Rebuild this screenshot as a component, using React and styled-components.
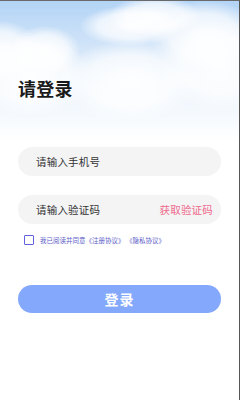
import React from "react";
import styled, { createGlobalStyle } from "styled-components";

const Global = createGlobalStyle`
  html, body { margin: 0; padding: 0; background: #fff; }
  body { font-family: "Noto Sans CJK SC", "Noto Sans", sans-serif; }
  * { box-sizing: border-box; }
`;

const Page = styled.div`
  position: relative;
  width: 240px;
  height: 400px;
  overflow: hidden;
  background: #fff;
  border-top: 1px solid #6a6a6a;
  border-right: 1px solid #555;
`;

const Sky = styled.div`
  position: absolute;
  left: 0;
  top: 0;
  width: 240px;
  height: 140px;
  background: linear-gradient(180deg, #b3d4f6 0%, #cfe3f8 30%, #eaf3fc 60%, #ffffff 100%);
  overflow: hidden;
`;

const Cloud = styled.div`
  position: absolute;
  border-radius: 50%;
  background: radial-gradient(ellipse at center, rgba(255,255,255,0.95) 0%, rgba(255,255,255,0.7) 45%, rgba(255,255,255,0) 72%);
`;

const Content = styled.div`
  position: relative;
  display: flex;
  flex-direction: column;
  padding: 0 18px 0 18px;
`;

const Title = styled.h1`
  margin: 74px 0 0 0;
  font-size: 18px;
  font-weight: 700;
  color: #1a1a1a;
  line-height: 26px;
  letter-spacing: 0.3px;
`;

const Field = styled.div`
  display: flex;
  align-items: center;
  justify-content: space-between;
  height: 29px;
  margin-top: ${(p) => p.$mt}px;
  padding: 0 8px 0 18px;
  border-radius: 15px;
  background: #f4f4f5;
`;

const Placeholder = styled.span`
  font-size: 10.5px;
  color: #333;
  letter-spacing: 0.2px;
`;

const CodeLink = styled.span`
  font-size: 10.5px;
  color: #ee6a8b;
  letter-spacing: 0.2px;
`;

const Agree = styled.div`
  display: flex;
  align-items: center;
  margin: 11px 0 0 6px;
  gap: 6px;
`;

const Box = styled.span`
  width: 10px;
  height: 10px;
  border: 1.3px solid #6060e0;
  border-radius: 1px;
`;

const AgreeText = styled.span`
  font-size: 6.5px;
  color: #5c5cc8;
  white-space: pre;
`;

const LoginButton = styled.button`
  margin-top: 40px;
  height: 28px;
  border: none;
  border-radius: 14px;
  background: #84a9fc;
  color: #fff;
  font-family: inherit;
  font-size: 14px;
  font-weight: 700;
  letter-spacing: 1px;
`;

export default function App() {
  return (
    <>
      <Global />
      <Page>
        <Sky>
          <Cloud style={{ left: -40, top: 20, width: 80, height: 60 }} />
          <Cloud style={{ left: -30, top: 35, width: 120, height: 80 }} />
          <Cloud style={{ left: 10, top: 25, width: 70, height: 50 }} />
          <Cloud style={{ left: 80, top: 5, width: 100, height: 40 }} />
          <Cloud style={{ left: 110, top: -5, width: 90, height: 40 }} />
          <Cloud style={{ left: 150, top: 0, width: 110, height: 70 }} />
          <Cloud style={{ left: 160, top: 20, width: 120, height: 90 }} />
          <Cloud style={{ left: 60, top: 40, width: 140, height: 80 }} />
        </Sky>
        <Content>
          <Title>请登录</Title>
          <Field $mt={46}>
            <Placeholder>请输入手机号</Placeholder>
          </Field>
          <Field $mt={19}>
            <Placeholder>请输入验证码</Placeholder>
            <CodeLink>获取验证码</CodeLink>
          </Field>
          <Agree>
            <Box />
            <AgreeText>{"我已阅读并同意《注册协议》 《隐私协议》"}</AgreeText>
          </Agree>
          <LoginButton>登录</LoginButton>
        </Content>
      </Page>
    </>
  );
}
